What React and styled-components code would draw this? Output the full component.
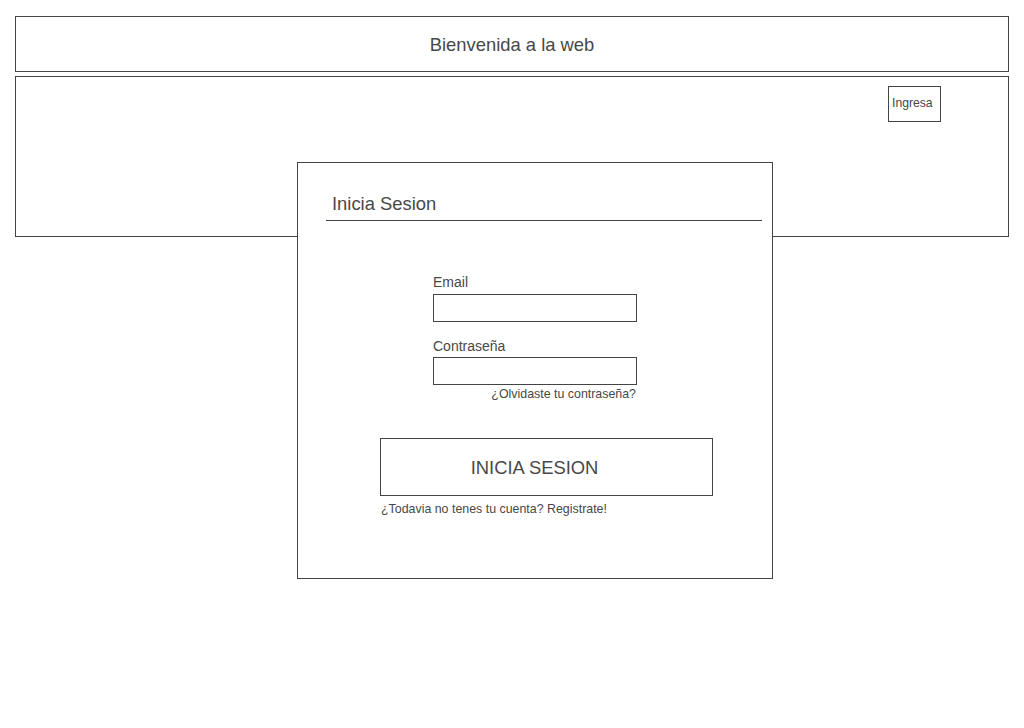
import styled, { createGlobalStyle } from "styled-components";

const GlobalStyle = createGlobalStyle`
  * { box-sizing: border-box; }
  html, body { height: 100%; }
  body {
    margin: 0;
    background: #fff;
    font-family: "Liberation Sans", Arial, sans-serif;
    color: #484848;
  }
`;

const Page = styled.div`
  position: relative;
  min-height: 728px;
  padding: 16px 15px;
  display: flex;
  flex-direction: column;
  gap: 4px;
`;

const Header = styled.header`
  height: 56px;
  border: 1px solid #444;
  display: flex;
  align-items: center;
  justify-content: center;
  font-size: 18.4px;
  padding-top: 2px;
`;

const Hero = styled.section`
  position: relative;
  height: 161px;
  flex: none;
  border: 1px solid #444;
  display: flex;
  justify-content: flex-end;
  align-items: flex-start;
  padding: 9px 67px 0 0;
`;

const LoginButton = styled.button`
  width: 53px;
  height: 36px;
  border: 1px solid #444;
  background: #fff;
  color: #484848;
  font-family: inherit;
  font-size: 12.2px;
  text-align: left;
  padding: 0 3px 2px;
  cursor: pointer;
`;

const Modal = styled.div`
  position: absolute;
  left: 281px;
  top: 85px;
  width: 476px;
  height: 417px;
  background: #fff;
  border: 1px solid #444;
  display: flex;
  flex-direction: column;
  z-index: 2;
`;

const ModalTitle = styled.h2`
  margin: 30px 10px 0 28px;
  padding: 0 0 5px 6px;
  font-size: 18.4px;
  font-weight: normal;
  line-height: 22px;
  border-bottom: 1px solid #444;
`;

const Fields = styled.div`
  align-self: center;
  width: 204px;
  margin-top: 53px;
  display: flex;
  flex-direction: column;
`;

const Label = styled.label`
  font-size: 14px;
  line-height: 16px;
  margin-top: ${p => p.$first ? "0" : "16px"};
  margin-bottom: ${p => p.$first ? "4px" : "3px"};
`;

const Input = styled.input`
  width: 204px;
  height: 28px;
  border: 1px solid #444;
  padding: 0 4px;
  font-family: inherit;
  outline: none;
`;

const SmallLink = styled.a`
  font-size: 12.4px;
  line-height: 14px;
  color: #484848;
  text-decoration: none;
  cursor: pointer;
  align-self: ${p => p.$right ? "flex-end" : "flex-start"};
  margin-top: ${p => p.$gap}px;
  margin-left: ${p => p.$right ? "0" : "83px"};
  margin-right: ${p => p.$right ? "1px" : "0"};
`;

const SubmitButton = styled.button`
  margin: 37px 0 0 82px;
  width: 333px;
  height: 58px;
  border: 1px solid #444;
  background: #fff;
  color: #484848;
  font-family: inherit;
  font-size: 18.4px;
  padding: 2px 24px 0 0;
  cursor: pointer;
`;

export default function App() {
  return (
    <>
      <GlobalStyle />
      <Page>
        <Header>Bienvenida a la web</Header>
        <Hero>
          <LoginButton>Ingresa</LoginButton>
          <Modal>
            <ModalTitle>Inicia Sesion</ModalTitle>
            <Fields>
              <Label $first>Email</Label>
              <Input type="email" />
              <Label>Contraseña</Label>
              <Input type="password" />
              <SmallLink $right $gap={2}>¿Olvidaste tu contraseña?</SmallLink>
            </Fields>
            <SubmitButton>INICIA SESION</SubmitButton>
            <SmallLink $gap={6}>¿Todavia no tenes tu cuenta? Registrate!</SmallLink>
          </Modal>
        </Hero>
      </Page>
    </>
  );
}
